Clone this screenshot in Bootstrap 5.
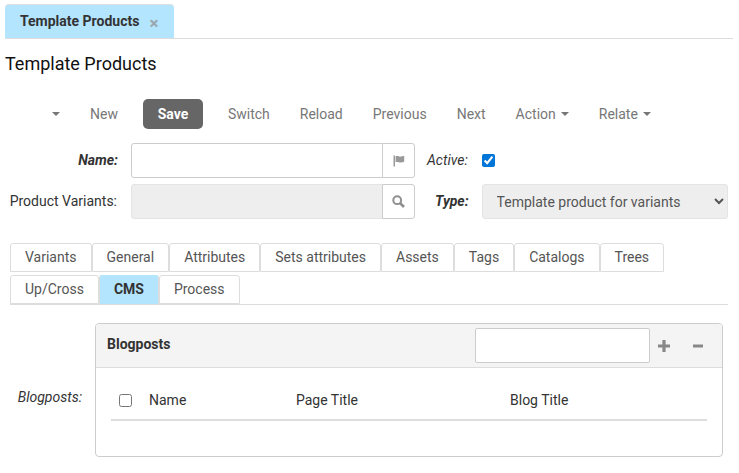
<!DOCTYPE html>
<html lang="en">
<head>
    <meta charset="UTF-8">
    <meta name="viewport" content="width=device-width, initial-scale=1.0">
    <title>Template Products</title>
    <link href="https://cdn.jsdelivr.net/npm/bootstrap@5.3.0/dist/css/bootstrap.min.css" rel="stylesheet">
    <style>
        body { font-family: Roboto, "Liberation Sans", sans-serif; font-size: 14px; color: #333; background: #fff; }
        .page-wrap { padding: 4px 6px 0 5px; height: 473px; overflow: hidden; }

        .top-tabs { border-bottom: 1px solid #ddd; height: 35px; }
        .top-tab { width: 169px; height: 34px; background: #b3e5ff; border-radius: 4px 4px 0 0; border-top: 1px solid #ddd; padding-left: 15px; font-weight: 700; color: #333; }
        .tab-close { color: #9aa5ad; font-size: 17px; font-weight: 700; margin-left: 10px; line-height: 1; margin-top: 3px; }
        .page-title { font-size: 18px; font-weight: 400; color: #111; margin: 14px 0 0; line-height: 21px; height: 21px; }

        .tool-bar { margin-top: 25px; height: 30px; padding-left: 47px; color: #777; }
        .tool-item { color: #777; text-decoration: none; line-height: 30px; }
        .tool-caret { display: inline-block; border-top: 4px solid #777; border-left: 4px solid transparent; border-right: 4px solid transparent; vertical-align: middle; }
        .btn-save { width: 60px; height: 30px; background: #666; color: #fff; font-weight: 700; font-size: 14px; border: 0; border-radius: 5px; padding: 0; }
        .btn-save:hover { background: #666; color: #fff; }

        .form-line { height: 35px; }
        .form-line + .form-line { margin-top: 6px; }
        .field-label { width: 113px; padding-right: 1px; text-align: right; color: #333; flex: none; }
        .field-label.is-req { padding-right: 0; font-weight: 700; font-style: italic; }
        .field-group { width: 284px; margin-left: 13px; flex: none; }
        .field-input { height: 35px; border: 1px solid #ccc; border-radius: 3px 0 0 3px; flex: 1; background: #fff; min-width: 0; }
        .field-input.is-off { background: #eee; border-color: #e4e4e4; }
        .field-addon { width: 33px; height: 35px; margin-left: -1px; border: 1px solid #ccc; border-radius: 0 3px 3px 0; background: #fff; }
        .side-label { font-style: italic; color: #333; flex: none; }
        .active-check { width: 13px; height: 13px; margin: 0 0 0 14px; accent-color: #0075d8; }
        .type-select { width: 246px; height: 35px; margin-left: 13px; background-color: #eee; border: 1px solid #e4e4e4; border-radius: 3px; color: #555; opacity: 1; font-size: 14px; font-family: inherit; padding: 0 10px; }

        .sub-tabs { margin: 24px 5px 0 5px; border-bottom: 1px solid #ddd; }
        .sub-row { height: 29px; }
        .sub-row + .sub-row { margin-top: 3px; height: 29px; }
        .sub-tab { height: 29px; padding: 0 14px; border: 1px solid #ddd; border-radius: 3px 3px 0 0; color: #555; line-height: 26px; background: #fff; }
        .sub-tab.is-on { background: #b3e5ff; font-weight: 700; color: #333; border-color: #b3e5ff #ddd #b3e5ff #ddd; }

        .panel-line { margin: 18px 0 0 5px; }
        .panel-label { width: 72px; margin-top: 66px; text-align: right; font-style: italic; color: #333; flex: none; line-height: 17px; }
        .panel-box { width: 628px; height: 134px; margin-left: 13px; border: 1px solid #ccc; border-radius: 4px; flex: none; overflow: hidden; }
        .panel-head { height: 44px; background: #f4f4f4; border-bottom: 1px solid #ddd; padding: 4px 0 0 11px; }
        .panel-title { font-weight: 700; color: #333; margin-top: 1px; line-height: 30px; }
        .panel-search { width: 175px; height: 35px; background: #fff; border: 1px solid #ccc; border-radius: 2px; margin-left: auto; }
        .panel-icons { height: 35px; gap: 22px; padding: 0 18px 0 8px; color: #888; }
        .list-head { margin: 20px 15px 0; height: 33px; border-bottom: 2px solid #ddd; padding: 0 0 6px 8px; }
        .list-check { width: 13px; height: 13px; margin: 0 17px 0 0; appearance: auto; flex: none; }
        .col-name { width: 147px; }
        .col-page { width: 214px; }
    </style>
</head>
<body>
    <div class="page-wrap">
        <!-- top tabs -->
        <div class="top-tabs d-flex">
            <div class="top-tab d-flex align-items-center">
                <span>Template Products</span>
                <span class="tab-close">×</span>
            </div>
        </div>
        <h1 class="page-title">Template Products</h1>

        <!-- toolbar -->
        <div class="tool-bar d-flex align-items-center">
            <span class="tool-caret" style="margin-right: 30px"></span>
            <a class="tool-item" href="#" style="margin-right: 25px">New</a>
            <button type="button" class="btn btn-save" style="margin-right: 25px">Save</button>
            <a class="tool-item" href="#" style="margin-right: 30px">Switch</a>
            <a class="tool-item" href="#" style="margin-right: 30px">Reload</a>
            <a class="tool-item" href="#" style="margin-right: 30px">Previous</a>
            <a class="tool-item" href="#" style="margin-right: 30px">Next</a>
            <a class="tool-item" href="#">Action</a><span class="tool-caret" style="margin: 0 30px 0 5px"></span>
            <a class="tool-item" href="#">Relate</a><span class="tool-caret" style="margin-left: 5px"></span>
        </div>

        <!-- form -->
        <div style="margin-top: 14px">
            <div class="form-line d-flex align-items-center">
                <div class="field-label is-req">Name:</div>
                <div class="field-group d-flex">
                    <div class="field-input"></div>
                    <div class="field-addon d-flex align-items-center justify-content-center">
                        <svg width="12" height="12" viewBox="0 0 12 12"><path fill="#999" d="M0.5 0.5h1.5v11H0.5zM2.6 1.2c2.4-.8 3.4.7 5.2.4 1.2-.2 2.2-.5 3.4-.8v6c-1.2.4-2.2.7-3.4.8-1.8.2-2.8-1.1-5.2-.4z"/></svg>
                    </div>
                </div>
                <div class="side-label" style="margin-left: 12px">Active:</div>
                <input type="checkbox" class="active-check" checked>
            </div>
            <div class="form-line d-flex align-items-center">
                <div class="field-label">Product Variants:</div>
                <div class="field-group d-flex">
                    <div class="field-input is-off"></div>
                    <div class="field-addon d-flex align-items-center justify-content-center">
                        <svg width="13" height="13" viewBox="0 0 13 13"><circle cx="5.2" cy="5.2" r="3.9" fill="none" stroke="#909090" stroke-width="2"/><path d="M8 8l4 4" stroke="#909090" stroke-width="2.6"/></svg>
                    </div>
                </div>
                <div class="side-label fw-bold" style="margin-left: 20px">Type:</div>
                <select class="type-select" disabled><option>Template product for variants</option></select>
            </div>
        </div>

        <!-- sub tabs -->
        <div class="sub-tabs">
            <div class="sub-row d-flex">
                <div class="sub-tab">Variants</div>
                <div class="sub-tab">General</div>
                <div class="sub-tab">Attributes</div>
                <div class="sub-tab">Sets attributes</div>
                <div class="sub-tab">Assets</div>
                <div class="sub-tab">Tags</div>
                <div class="sub-tab">Catalogs</div>
                <div class="sub-tab">Trees</div>
            </div>
            <div class="sub-row d-flex">
                <div class="sub-tab">Up/Cross</div>
                <div class="sub-tab is-on">CMS</div>
                <div class="sub-tab">Process</div>
            </div>
        </div>

        <!-- blogposts panel -->
        <div class="panel-line d-flex">
            <div class="panel-label">Blogposts:</div>
            <div class="panel-box">
                <div class="panel-head d-flex align-items-start">
                    <div class="panel-title">Blogposts</div>
                    <div class="panel-search"></div>
                    <div class="panel-icons d-flex align-items-center">
                        <svg width="12" height="12" viewBox="0 0 12 12"><path fill="#888" d="M4.4 0h3.2v4.4H12v3.2H7.6V12H4.4V7.6H0V4.4h4.4z"/></svg>
                        <svg width="12" height="12" viewBox="0 0 12 12"><path fill="#888" d="M1 4.5h10v3H1z"/></svg>
                    </div>
                </div>
                <div class="list-head d-flex align-items-center">
                    <input type="checkbox" class="list-check">
                    <div class="col-name">Name</div>
                    <div class="col-page">Page Title</div>
                    <div>Blog Title</div>
                </div>
            </div>
        </div>
    </div>

    <script src="https://cdn.jsdelivr.net/npm/bootstrap@5.3.0/dist/js/bootstrap.bundle.min.js"></script>
</body>
</html>
